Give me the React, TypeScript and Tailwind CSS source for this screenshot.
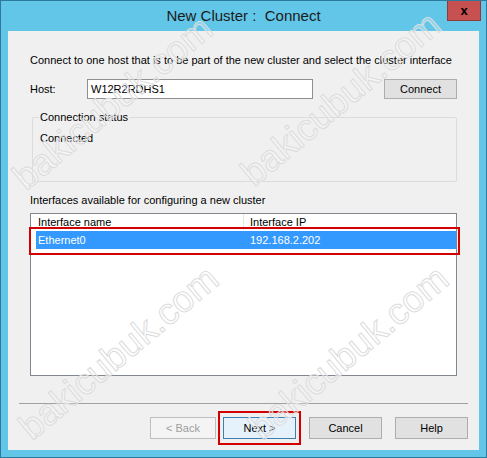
import * as React from 'react'

const font = { fontFamily: '"Liberation Sans", Arial, sans-serif' }

function Watermark({ className }: { className: string }) {
  return (
    <span
      className={`pointer-events-none absolute w-[260px] h-[44px] leading-[44px] text-center whitespace-nowrap text-[37px] text-white/30 [-webkit-text-stroke:1px_#dcdcdc] -rotate-[40deg] ${className}`}
    >
      bakicubuk.com
    </span>
  )
}

export default function App() {
  return (
    <div className="relative w-[487px] h-[458px] overflow-hidden bg-[#62c6e8] border border-[#2d7a9c]" style={font}>
      {/* Title bar */}
      <div className="relative h-[30px] flex items-center justify-center">
        <span className="text-[15px] text-[#1b1b1b] mt-[1px]">New Cluster :&nbsp; Connect</span>
        <div className="absolute right-[5px] top-[-1px] w-[34px] h-[21px] bg-[#c75050] border border-[#8f3a3a] border-t-0 flex items-center justify-center">
          <span className="text-[13px] font-bold text-black leading-none">x</span>
        </div>
      </div>

      {/* Client area */}
      <div className="mx-[7px] h-[419px] bg-[#f0f0f0] flex flex-col text-[11px] leading-[14px] text-black">
        <p className="mt-[22px] ml-[22px]">
          Connect to one host that is to be part of the new cluster and select the cluster interface
        </p>

        <div className="mt-[12px] flex items-center h-[20px]">
          <span className="ml-[22px] w-[57px]">Host:</span>
          <div className="w-[226px] h-[20px] bg-white border border-[#8e8f8f] flex items-center pl-[3px]">
            W12R2RDHS1
          </div>
          <button className="ml-[71px] w-[73px] h-[20px] bg-[#e1e1e1] border border-[#adadad]">
            Connect
          </button>
        </div>

        {/* Group box */}
        <div className="relative mt-[18px] ml-[24px] w-[425px] h-[65px] border border-[#dcdcdc] rounded-[2px]">
          <span className="absolute -top-[8px] left-[6px] bg-[#f0f0f0] px-[1px]">
            Connection status
          </span>
          <span className="absolute top-[13px] left-[7px]">Connected</span>
        </div>

        <p className="mt-[11px] ml-[22px]">Interfaces available for configuring a new cluster</p>

        {/* List view */}
        <div className="relative mt-[6px] ml-[22px] w-[427px] h-[163px] bg-white border border-[#828790]">
          <div className="flex h-[16px] leading-[16px]">
            <div className="w-[213px] pl-[7px] border-r border-[#e5e5e5]">Interface name</div>
            <div className="pl-[6px]">Interface IP</div>
          </div>
          <div className="ml-[5px] mt-[1px] h-[18px] bg-[#3399ff] text-white flex items-center">
            <span className="w-[214px] pl-[2px]">Ethernet0</span>
            <span>192.168.2.202</span>
          </div>
          <div className="absolute left-[-2px] top-[13px] w-[431px] h-[28px] border-[2px] border-[#d20000]" />
        </div>

        {/* Separator */}
        <div className="mt-[27px] mx-[11px] h-[1px] bg-[#a0a0a0]" />

        {/* Buttons */}
        <div className="mt-[7px] flex items-center">
          <button className="ml-[142px] w-[66px] h-[22px] bg-[#f4f4f4] border border-[#bfbfbf] text-[#9d9d9d]">
            &lt; Back
          </button>
          <div className="ml-[2px] px-[3px] py-[4px] border-[2px] border-[#d20000]">
            <button className="w-[73px] h-[22px] bg-[#e5f1fb] border border-[#3c7fb1]">
              Next &gt;
            </button>
          </div>
          <button className="ml-[8px] w-[73px] h-[22px] bg-[#e1e1e1] border border-[#adadad]">
            Cancel
          </button>
          <button className="ml-[13px] w-[73px] h-[22px] bg-[#e1e1e1] border border-[#adadad]">
            Help
          </button>
        </div>
      </div>

      {/* Watermarks */}
      <Watermark className="left-[-18px] top-[80px]" />
      <Watermark className="left-[210px] top-[76px]" />
      <Watermark className="left-[-12px] top-[330px]" />
      <Watermark className="left-[218px] top-[330px]" />
    </div>
  )
}
